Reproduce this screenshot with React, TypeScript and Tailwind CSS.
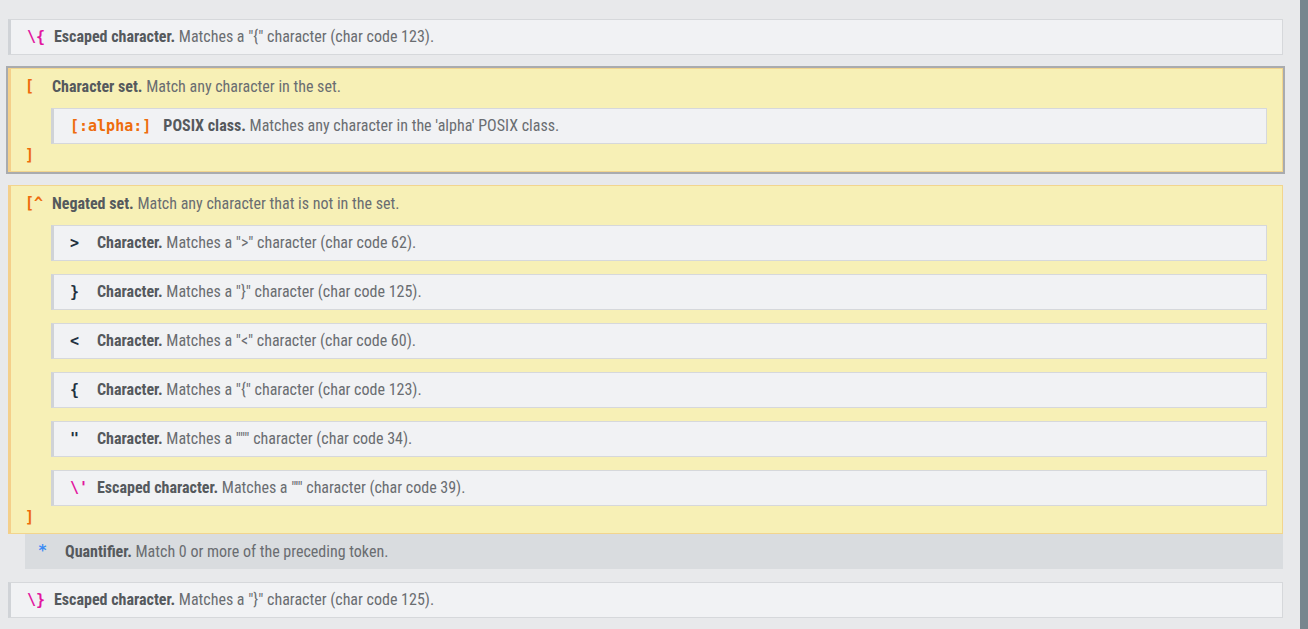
import React from 'react';

type Kind = 'esc' | 'set' | 'char' | 'quant';

const tokenColor: Record<Kind, string> = {
  esc: 'text-[#e2169f]',
  set: 'text-[#ee6c0c]',
  char: 'text-[#22313f]',
  quant: 'text-[#3b8bf5]',
};

function Token({ kind, children, wide }: { kind: Kind; children: React.ReactNode; wide?: boolean }) {
  return (
    <span
      className={`inline-block font-bold text-[15px] [font-stretch:100%] font-['DejaVu_Sans_Mono',monospace] whitespace-pre ${tokenColor[kind]} ${
        wide ? 'mr-[12px]' : 'min-w-[27px]'
      }`}
    >
      {children}
    </span>
  );
}

function Desc({ label, text }: { label: string; text: string }) {
  return (
    <span className="text-[#6a6d71]">
      <b className="font-bold text-[#55595d]">{label}</b> {text}
    </span>
  );
}

function Row({ kind, token, label, text, wide }: { kind: Kind; token: string; label: string; text: string; wide?: boolean }) {
  return (
    <div className="h-9 flex items-center border border-[#d6d8db] border-l-[3px] border-l-[#d0d3d7] bg-[#f1f2f4] pl-[16px]">
      <Token kind={kind} wide={wide}>{token}</Token>
      <Desc label={label} text={text} />
    </div>
  );
}

function Group({
  open,
  label,
  text,
  selected,
  children,
}: {
  open: string;
  label: string;
  text: string;
  selected?: boolean;
  children: React.ReactNode;
}) {
  return (
    <div className={selected ? 'outline-2 outline-[#a9abae]' : ''}>
      <div className="border border-[#f2d58e] border-l-[3px] border-l-[#f4cf8a] bg-[#f7f0b6]">
        <div className="h-[35px] flex items-center pl-[14px]">
          <Token kind="set">{open}</Token>
          <Desc label={label} text={text} />
        </div>
        <div className="pt-[4px] pl-[40px] pr-[15px] flex flex-col gap-[13px]">{children}</div>
        <div className="pt-[3px] pb-[8px] pl-[14px] leading-[16px]">
          <Token kind="set">]</Token>
        </div>
      </div>
    </div>
  );
}

const negated = [
  { kind: 'char' as Kind, token: '>', label: 'Character.', text: 'Matches a ">" character (char code 62).' },
  { kind: 'char' as Kind, token: '}', label: 'Character.', text: 'Matches a "}" character (char code 125).' },
  { kind: 'char' as Kind, token: '<', label: 'Character.', text: 'Matches a "<" character (char code 60).' },
  { kind: 'char' as Kind, token: '{', label: 'Character.', text: 'Matches a "{" character (char code 123).' },
  { kind: 'char' as Kind, token: '"', label: 'Character.', text: 'Matches a """ character (char code 34).' },
  { kind: 'esc' as Kind, token: "\\'", label: 'Escaped character.', text: "Matches a \"'\" character (char code 39)." },
];

export default function App() {
  return (
    <div className="h-screen flex bg-[#e8e9eb] overflow-hidden font-['Roboto',sans-serif] [font-stretch:75%] text-[16px]">
      <div className="flex-1 pl-2 pr-[17px] pt-[19px] flex flex-col">
        <Row kind="esc" token="\{" label="Escaped character." text={'Matches a "{" character (char code 123).'} />

        <div className="mt-[13px]">
          <Group open="[" label="Character set." text="Match any character in the set." selected>
            <Row kind="set" token="[:alpha:]" wide label="POSIX class." text="Matches any character in the 'alpha' POSIX class." />
          </Group>
        </div>

        <div className="mt-[13px]">
          <Group open="[^" label="Negated set." text="Match any character that is not in the set.">
            {negated.map((n, i) => (
              <Row key={i} kind={n.kind} token={n.token} label={n.label} text={n.text} />
            ))}
          </Group>
        </div>

        <div className="ml-[17px] h-[35px] flex items-center bg-[#d9dcdf] pl-[13px]">
          <Token kind="quant">*</Token>
          <Desc label="Quantifier." text="Match 0 or more of the preceding token." />
        </div>

        <div className="mt-[13px]">
          <Row kind="esc" token="\}" label="Escaped character." text={'Matches a "}" character (char code 125).'} />
        </div>
      </div>
      <div className="w-2 bg-[#77868e]" />
    </div>
  );
}
